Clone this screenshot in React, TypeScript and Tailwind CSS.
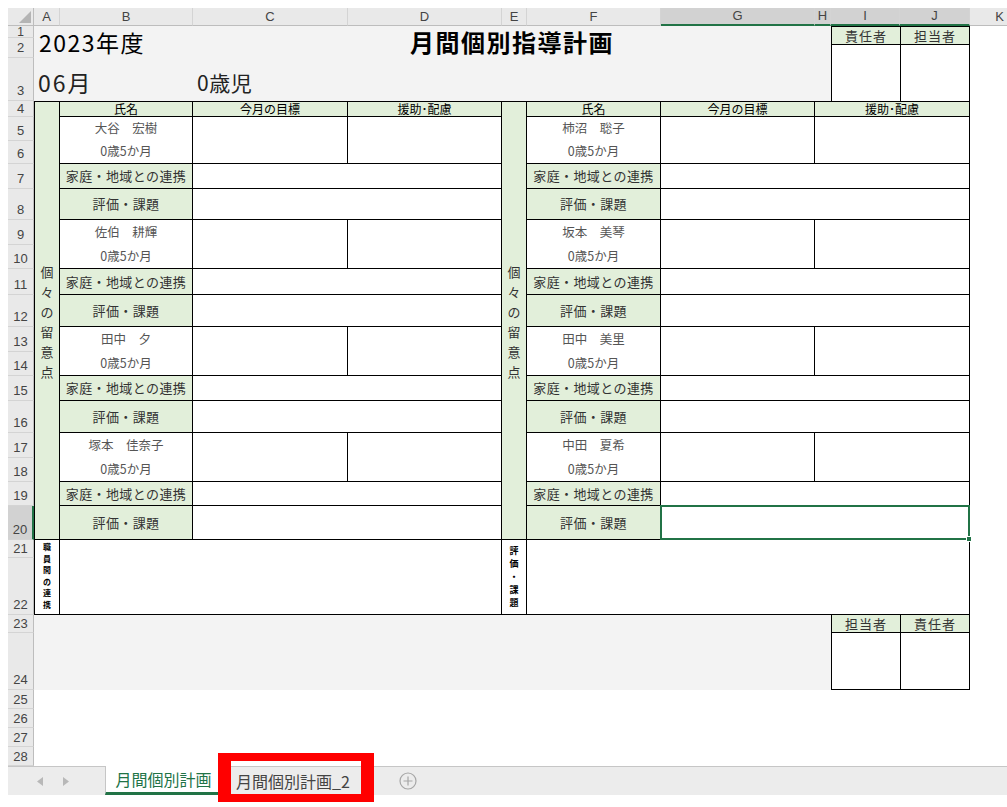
import type { ReactNode } from 'react'

const jp = "font-['Noto_Sans_CJK_JP','Noto_Sans',sans-serif]"
const cell = 'border-r border-b border-black'
const green = 'bg-[#e2efda]'

const colHeads = [
  { l: 'A', w: 'w-[26px]' },
  { l: 'B', w: 'w-[133px]' },
  { l: 'C', w: 'w-[155px]' },
  { l: 'D', w: 'w-[154px]' },
  { l: 'E', w: 'w-[25px]' },
  { l: 'F', w: 'w-[134px]' },
  { l: 'G', w: 'w-[154px]', sel: true },
  { l: 'H', w: 'w-[16px]', sel: true },
  { l: 'I', w: 'w-[69px]', sel: true },
  { l: 'J', w: 'w-[70px]', sel: true },
  { l: 'K', w: 'w-[60px]' },
]

const rowHeads = [
  { n: '1', h: 'h-[12px] items-center text-[12px] leading-[12px]' },
  { n: '2', h: 'h-[20px] items-end pb-[2px] leading-[15px]' },
  { n: '3', h: 'h-[43px] items-end pb-[2px] leading-[15px]' },
  { n: '4', h: 'h-[16px] items-center leading-[14px]' },
  { n: '5', h: 'h-[24px] items-end pb-[2px] leading-[15px]' },
  { n: '6', h: 'h-[23px] items-end pb-[2px] leading-[15px]' },
  { n: '7', h: 'h-[25px] items-end pb-[2px] leading-[15px]' },
  { n: '8', h: 'h-[31px] items-end pb-[2px] leading-[15px]' },
  { n: '9', h: 'h-[25px] items-end pb-[2px] leading-[15px]' },
  { n: '10', h: 'h-[24px] items-end pb-[2px] leading-[15px]' },
  { n: '11', h: 'h-[26px] items-end pb-[2px] leading-[15px]' },
  { n: '12', h: 'h-[32px] items-end pb-[2px] leading-[15px]' },
  { n: '13', h: 'h-[25px] items-end pb-[2px] leading-[15px]' },
  { n: '14', h: 'h-[24px] items-end pb-[2px] leading-[15px]' },
  { n: '15', h: 'h-[25px] items-end pb-[2px] leading-[15px]' },
  { n: '16', h: 'h-[32px] items-end pb-[2px] leading-[15px]' },
  { n: '17', h: 'h-[25px] items-end pb-[2px] leading-[15px]' },
  { n: '18', h: 'h-[24px] items-end pb-[2px] leading-[15px]' },
  { n: '19', h: 'h-[24px] items-end pb-[2px] leading-[15px]' },
  { n: '20', h: 'h-[34px] items-end pb-[2px] leading-[15px]', sel: true },
  { n: '21', h: 'h-[18px] items-end pb-[1px] leading-[15px]' },
  { n: '22', h: 'h-[57px] items-end pb-[2px] leading-[15px]' },
  { n: '23', h: 'h-[18px] items-end pb-[1px] leading-[15px]' },
  { n: '24', h: 'h-[57px] items-end pb-[2px] leading-[15px]' },
  { n: '25', h: 'h-[19px] items-end pb-[1px] leading-[15px]' },
  { n: '26', h: 'h-[19px] items-end pb-[1px] leading-[15px]' },
  { n: '27', h: 'h-[19px] items-end pb-[1px] leading-[15px]' },
  { n: '28', h: 'h-[19px] items-end pb-[1px] leading-[15px]' },
]

const students = [
  ['大谷　宏樹', '柿沼　聡子'],
  ['佐伯　耕輝', '坂本　美琴'],
  ['田中　夕', '田中　美里'],
  ['塚本　佳奈子', '中田　夏希'],
]

const VText = ({ text, className }: { text: string; className: string }) => (
  <div className={`flex flex-col items-center ${className}`}>
    {[...text].map((c, i) => (
      <span key={i}>{c}</span>
    ))}
  </div>
)

const Head = ({ children }: { children: ReactNode }) => (
  <div className={`${cell} ${green} flex items-center justify-center text-[12px] leading-none text-black`}>
    {children}
  </div>
)

const Label = ({ text }: { text: string }) => (
  <div className={`${cell} ${green} flex items-center justify-center text-[13px] tracking-[0.4px] text-[#333]`}>
    {text}
  </div>
)

const NameCell = ({ name }: { name: string }) => (
  <div className={`${cell} flex flex-col text-[12.5px] leading-none text-[#555]`}>
    <div className="flex flex-1 items-center justify-center">{name}</div>
    <div className="flex flex-1 items-center justify-center">0歳5か月</div>
  </div>
)

const Block = ({ left, right, last }: { left: string; right: string; last: boolean }) => (
  <>
    <NameCell name={left} />
    <div className={cell} />
    <div className={cell} />
    <NameCell name={right} />
    <div className={cell} />
    <div className={cell} />
    <Label text="家庭・地域との連携" />
    <div className={`${cell} col-span-2`} />
    <Label text="家庭・地域との連携" />
    <div className={`${cell} col-span-2`} />
    <Label text="評価・課題" />
    <div className={`${cell} col-span-2`} />
    <Label text="評価・課題" />
    <div className={`${cell} relative col-span-2`}>
      {last && (
        <div className="absolute -top-px -left-px -right-px -bottom-px z-10 border-2 border-[#217346]">
          <span className="absolute -right-[4px] -bottom-[4px] h-[6px] w-[6px] border border-white bg-[#217346]" />
        </div>
      )}
    </div>
  </>
)

const SignBox = ({ a, b, top }: { a: string; b: string; top: boolean }) => (
  <div className={`flex w-[139px] flex-col border-x border-black ${top ? 'border-t' : 'border-b'}`}>
    <div className={`flex h-[18px] border-b border-black ${green} text-[13px] leading-none tracking-[1px] text-[#333]`}>
      <div className="flex w-[69px] items-center justify-center border-r border-black">{a}</div>
      <div className="flex flex-1 items-center justify-center">{b}</div>
    </div>
    <div className="flex flex-1 bg-white">
      <div className="w-[69px] border-r border-black" />
      <div className="flex-1" />
    </div>
  </div>
)

export default function App() {
  return (
    <div className={`relative h-[807px] w-[1007px] overflow-hidden bg-white ${jp}`}>
      <div className="pl-2 pt-2">
        {/* column headers */}
        <div className="flex h-[18px] font-['Liberation_Sans',sans-serif] text-[13px] text-[#444]">
          <div className="relative w-[26px] shrink-0 border-r border-b border-[#bdbdbd] bg-[#e9e9e9]">
            <svg className="absolute right-[2px] bottom-[2px]" width="12" height="12" viewBox="0 0 12 12">
              <polygon points="12,0 12,12 0,12" fill="#b4b4b4" />
            </svg>
          </div>
          {colHeads.map((c) => (
            <div
              key={c.l}
              className={`flex shrink-0 items-center justify-center border-r border-r-[#d4d4d4] ${c.w} ${
                c.sel ? 'border-b-2 border-b-[#217346] bg-[#d2d2d2]' : 'border-b border-b-[#bdbdbd] bg-[#e9e9e9]'
              }`}
            >
              {c.l}
            </div>
          ))}
        </div>

        <div className="flex">
          {/* row headers */}
          <div className="flex w-[26px] shrink-0 flex-col font-['Liberation_Sans',sans-serif] text-[13px] text-[#444]">
            {rowHeads.map((r) => (
              <div
                key={r.n}
                className={`flex justify-center border-b border-b-[#d4d4d4] ${r.h} ${
                  r.sel ? 'border-r-2 border-r-[#217346] bg-[#d2d2d2]' : 'border-r border-r-[#bdbdbd] bg-[#e9e9e9]'
                }`}
              >
                {r.n}
              </div>
            ))}
          </div>

          {/* sheet */}
          <div className="flex flex-col text-black">
            <div className="flex h-[75px]">
              <div className="flex w-[797px] flex-col bg-[#f3f3f3]">
                <div className="flex h-[32px] items-center">
                  <span className="w-[376px] shrink-0 pl-[5px] text-[23px] leading-none tracking-[1.5px]">2023年度</span>
                  <span className="text-[24px] font-bold leading-none tracking-[1.5px]">月間個別指導計画</span>
                </div>
                <div className="flex flex-1 items-center pt-[6px]">
                  <span className="w-[163px] shrink-0 pl-[4px] text-[23px] leading-none tracking-[2px] text-[#222]">06月</span>
                  <span className="text-[21px] leading-none tracking-[0.5px] text-[#222]">0歳児</span>
                </div>
              </div>
              <SignBox a="責任者" b="担当者" top />
            </div>

            <div className="grid w-[936px] grid-cols-[25px_133px_155px_154px_25px_134px_154px_155px] grid-rows-[15px_47px_25px_31px_49px_26px_32px_49px_25px_32px_49px_24px_34px_75px] border-l border-t border-black">
              <div className={`${cell} ${green} row-span-13 flex items-center justify-center`}>
                <VText text="個々の留意点" className="pt-[2px] text-[13px] leading-[20px] text-[#333]" />
              </div>
              <Head>氏名</Head>
              <Head>今月の目標</Head>
              <Head>援助･配慮</Head>
              <div className={`${cell} ${green} row-span-13 flex items-center justify-center`}>
                <VText text="個々の留意点" className="pt-[2px] text-[13px] leading-[20px] text-[#333]" />
              </div>
              <Head>氏名</Head>
              <Head>今月の目標</Head>
              <Head>援助･配慮</Head>

              {students.map(([l, r], i) => (
                <Block key={l} left={l} right={r} last={i === students.length - 1} />
              ))}

              <div className={`${cell} flex justify-center`}>
                <VText text="職員間の連携" className="pt-[1px] text-[8px] font-bold leading-[11.5px]" />
              </div>
              <div className={`${cell} col-span-3`} />
              <div className={`${cell} flex justify-center`}>
                <VText text="評価・課題" className="pt-[4px] text-[9px] font-bold leading-[13px]" />
              </div>
              <div className={`${cell} col-span-3`} />
            </div>

            <div className="flex h-[75px]">
              <div className="w-[797px] bg-[#f3f3f3]" />
              <SignBox a="担当者" b="責任者" top={false} />
            </div>
          </div>
        </div>

        {/* sheet tabs */}
        <div className="flex h-[29px] border-t border-[#c6c6c6] bg-[#ececec]">
          <div className="flex w-[97px] items-center pl-[29px]">
            <svg width="6" height="9" viewBox="0 0 6 9">
              <polygon points="6,0 6,9 0,4.5" fill="#b8b8b8" />
            </svg>
            <svg className="ml-[20px]" width="6" height="9" viewBox="0 0 6 9">
              <polygon points="0,0 0,9 6,4.5" fill="#b8b8b8" />
            </svg>
          </div>
          <div className="-mt-px flex w-[117px] items-center justify-center border-x border-[#c6c6c6] border-b-[3px] border-b-[#217346] bg-white text-[16px] text-[#217346]">
            月間個別計画
          </div>
          <div className="flex w-[138px] items-center justify-center pl-[4px] text-[16px] text-[#444]">月間個別計画_2</div>
          <div className="ml-[39px] flex items-center">
            <svg width="18" height="18" viewBox="0 0 18 18" fill="none" stroke="#a6a6a6" strokeWidth="1.2">
              <circle cx="9" cy="9" r="8" />
              <path d="M9 4.5v9M4.5 9h9" />
            </svg>
          </div>
        </div>
      </div>

      {/* annotation */}
      <div className="absolute top-[753px] left-[218px] h-[49px] w-[156px] border-x-[13px] border-t-[8px] border-b-[8px] border-[#ff0000]" />
    </div>
  )
}
